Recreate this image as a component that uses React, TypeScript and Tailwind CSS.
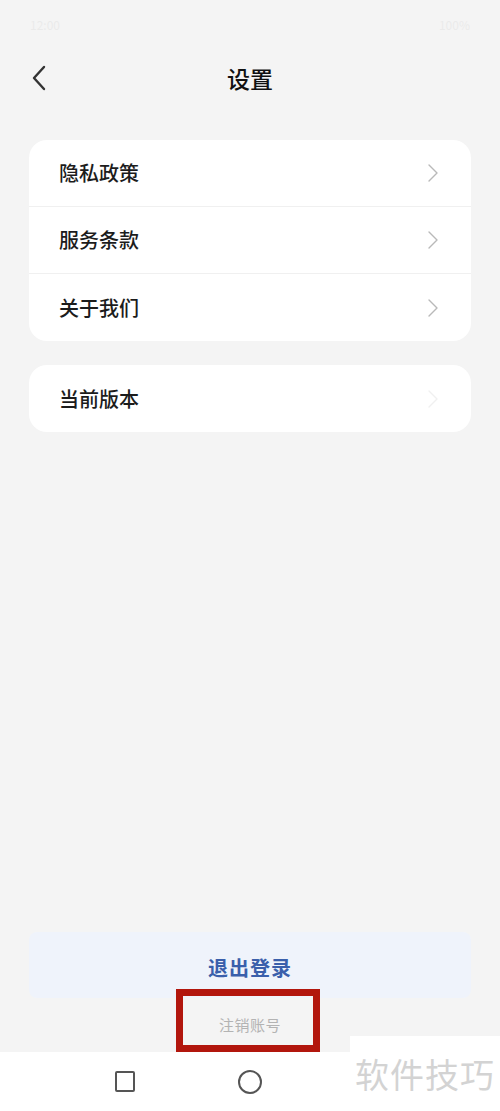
const font = { fontFamily: '"Noto Sans CJK SC", "Noto Sans", sans-serif' }

function Chevron({ faint }: { faint?: boolean }) {
  return (
    <svg width="12" height="20" viewBox="0 0 12 20" fill="none">
      <path d="M2 2l8 8-8 8" stroke={faint ? '#f0f0f0' : '#b9b9b9'} strokeWidth={1.4} strokeLinecap="round" strokeLinejoin="round" />
    </svg>
  )
}

function Row({ label, last, faint }: { label: string; last?: boolean; faint?: boolean }) {
  return (
    <div className={`flex items-center justify-between h-[67px] pl-[30px] pr-[32px] ${last ? '' : 'border-b border-[#f0f0f0]'}`}>
      <span className="text-[20px] font-medium text-[#1c1c1c]">{label}</span>
      <Chevron faint={faint} />
    </div>
  )
}

export default function App() {
  return (
    <div className="relative h-[1111px] w-[500px] flex flex-col bg-[#f4f4f4] overflow-hidden" style={font}>
      {/* faded status bar */}
      <div className="h-[50px] flex items-center justify-between px-[30px] opacity-10 text-[12px] text-[#999]">
        <span>12:00</span>
        <span>100%</span>
      </div>

      {/* Header */}
      <div className="relative h-[56px] flex items-center justify-center">
        <svg className="absolute left-[30px] top-[14px]" width="20" height="28" viewBox="0 0 20 28" fill="none">
          <path d="M14 3L4 14l10 11" stroke="#333" strokeWidth={2.4} strokeLinecap="round" strokeLinejoin="round" />
        </svg>
        <span className="text-[23px] font-medium text-[#111]">设置</span>
      </div>

      {/* Cards */}
      <div className="mx-[29px] mt-[34px] bg-white rounded-[18px]">
        <Row label="隐私政策" />
        <Row label="服务条款" />
        <Row label="关于我们" last />
      </div>

      <div className="mx-[29px] mt-[24px] bg-white rounded-[18px]">
        <Row label="当前版本" last faint />
      </div>

      <div className="flex-1" />

      {/* Logout */}
      <div className="mx-[29px] h-[66px] rounded-[8px] bg-[#eff3fb] flex items-center justify-center pt-[6px]">
        <span className="text-[20px] font-bold text-[#3a5fab] tracking-[1px]">退出登录</span>
      </div>

      <div className="relative h-[54px] flex items-center justify-center">
        <span className="text-[15px] text-[#b3b3b3] tracking-[0.5px]">注销账号</span>
        <div className="absolute left-[176px] top-[-9px] w-[144px] h-[63px] border-[7px] border-[#b2160d]" />
      </div>

      {/* Nav bar */}
      <div className="h-[59px] bg-white flex items-center">
        <div className="w-[250px] flex justify-center">
          <div className="w-[20px] h-[21px] border-2 border-[#555] rounded-[2px]" />
        </div>
        <div className="w-[250px] flex">
          <div className="w-[24px] h-[24px] -ml-[12px] rounded-full border-2 border-[#555]" />
        </div>
      </div>

      {/* Watermark */}
      <div className="absolute right-0 bottom-0 w-[150px] h-[75px] bg-white flex items-center justify-center">
        <span className="text-[34px] text-[#d3d3d3] tracking-[1px]">软件技巧</span>
      </div>
    </div>
  )
}
